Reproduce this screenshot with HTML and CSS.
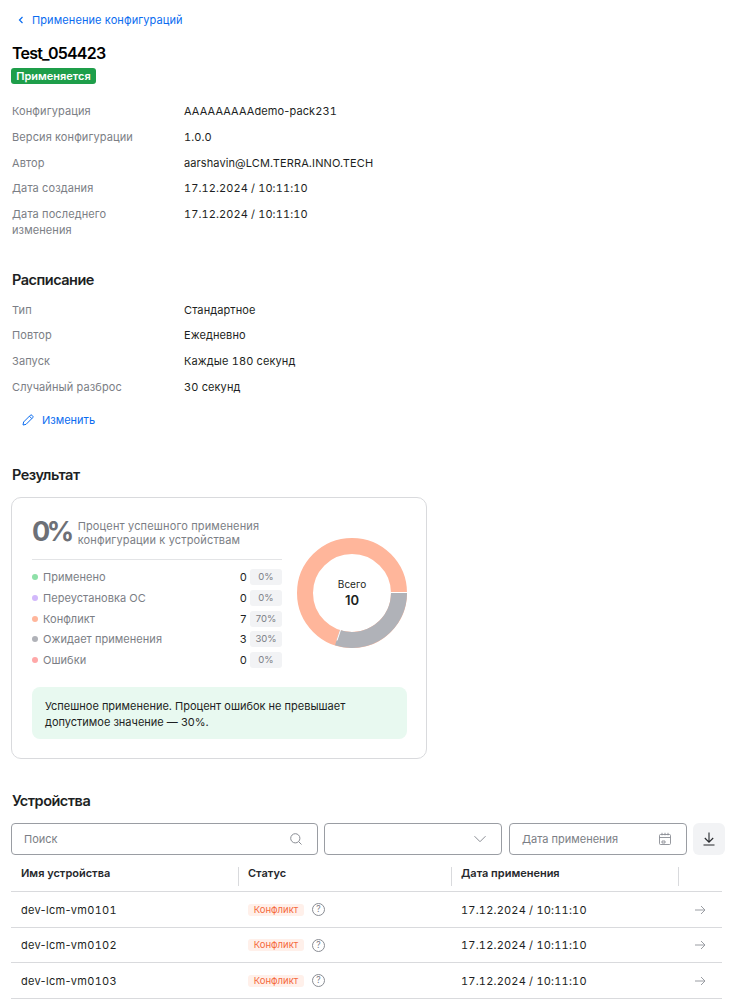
FILE: index.html
```html
<!DOCTYPE html>
<html>

<head>
  <title>Test_054423</title>
  <link rel="stylesheet" href="styles.css">
</head>

<body>
  <a class="back" href="#">
    <svg width="10" height="10" viewBox="0 0 10 10"><path d="M6.500 2 3.500 5l3 3" fill="none" stroke="#0a6cf0" stroke-width="1.200"/></svg>
    Применение конфигураций
  </a>
  <h1>Test_054423</h1>
  <span class="badge">Применяется</span>

  <div class="details first">
    <div class="name">Конфигурация</div><div>AAAAAAAAAdemo-pack<span class="num">231</span></div>
    <div class="name">Версия конфигурации</div><div class="num">1.0.0</div>
    <div class="name">Автор</div><div>aarshavin@LCM.TERRA.INNO.TECH</div>
    <div class="name">Дата создания</div><div class="num">17.12.2024 / 10:11:10</div>
    <div class="name">Дата последнего изменения</div><div class="num">17.12.2024 / 10:11:10</div>
  </div>

  <h2 class="schedule">Расписание</h2>
  <div class="details">
    <div class="name">Тип</div><div>Стандартное</div>
    <div class="name">Повтор</div><div>Ежедневно</div>
    <div class="name">Запуск</div><div>Каждые <span class="num">180</span> секунд</div>
    <div class="name">Случайный разброс</div><div><span class="num">30</span> секунд</div>
  </div>
  <a class="edit" href="#">
    <svg width="14" height="14" viewBox="0 0 14 14"><path d="M2 12l.6-3L9.300 2.300a1.200 1.200 0 0 1 1.700 0l.7.7a1.200 1.200 0 0 1 0 1.700L5 11.400zM8.400 3.200l2.400 2.400" fill="none" stroke="#0a6cf0" stroke-width="1"/></svg>
    Изменить
  </a>

  <h2 class="result">Результат</h2>
  <div class="card">
    <div class="card-top">
      <div class="stats">
        <div class="summary">
          <span class="percent">0%</span>
          <span class="summary-text">Процент успешного применения конфигурации к устройствам</span>
        </div>
        <div class="legend">
          <div class="legend-row"><i class="dot green"></i><span class="legend-name">Применено</span><span class="count">0</span><span class="share">0%</span></div>
          <div class="legend-row"><i class="dot violet"></i><span class="legend-name">Переустановка ОС</span><span class="count">0</span><span class="share">0%</span></div>
          <div class="legend-row"><i class="dot orange"></i><span class="legend-name">Конфликт</span><span class="count">7</span><span class="share">70%</span></div>
          <div class="legend-row"><i class="dot grey"></i><span class="legend-name">Ожидает применения</span><span class="count">3</span><span class="share">30%</span></div>
          <div class="legend-row"><i class="dot red"></i><span class="legend-name">Ошибки</span><span class="count">0</span><span class="share">0%</span></div>
        </div>
      </div>
      <div class="donut">
        <svg width="110" height="110" viewBox="0 0 110 110">
          <circle cx="55" cy="55" r="47" fill="none" stroke="#ffb69b" stroke-width="16"/>
          <path d="M102 55A47 47 0 0 1 40.500 99.700" fill="none" stroke="#b0b2b8" stroke-width="16"/>
          <path d="M110 54.500H94M40 102.500 45.200 87" fill="none" stroke="#fff" stroke-width="1"/>
        </svg>
        <div class="donut-label"><span>Всего</span><b>10</b></div>
      </div>
    </div>
    <div class="note">Успешное применение. Процент ошибок не превышает допустимое значение — 30%.</div>
  </div>

  <h2 class="devices">Устройства</h2>
  <div class="toolbar">
    <div class="field search">
      <span>Поиск</span>
      <svg width="14" height="14" viewBox="0 0 14 14"><circle cx="6.300" cy="6.300" r="4.600" fill="none" stroke="#8a8d94"/><path d="m9.700 9.700 2.800 2.800" stroke="#8a8d94"/></svg>
    </div>
    <div class="field select">
      <span></span>
      <svg width="14" height="14" viewBox="0 0 14 14"><path d="M1.500 4.200 7 9.700l5.500-5.500" fill="none" stroke="#8a8d94"/></svg>
    </div>
    <div class="field date">
      <span>Дата применения</span>
      <svg width="14" height="14" viewBox="0 0 14 14"><path d="M2.500 2.500h9a1 1 0 0 1 1 1v8a1 1 0 0 1-1 1h-9a1 1 0 0 1-1-1v-8a1 1 0 0 1 1-1zM1.500 5.500h11M4 .8v2.500M7 .8v2.500M10 .8v2.500M4 9h3v2H4z" fill="none" stroke="#8a8d94" stroke-width=".9"/></svg>
    </div>
    <button class="download">
      <svg width="16" height="16" viewBox="0 0 16 16"><path d="M8 1.500v9.500M3.800 7 8 11.200 12.200 7M2.500 14h11" fill="none" stroke="#26282c" stroke-width="1.100"/></svg>
    </button>
  </div>

  <table>
    <thead>
      <tr>
        <th class="col-name"><div>Имя устройства</div></th>
        <th class="col-status"><div>Статус</div></th>
        <th class="col-date"><div>Дата применения</div></th>
        <th class="col-arrow"><div></div></th>
      </tr>
    </thead>
    <tbody>
      <tr>
        <td>dev-lcm-vm<span class="num">0101</span></td>
        <td><div class="status"><span class="tag">Конфликт</span><span class="help">?</span></div></td>
        <td class="num date-cell">17.12.2024 / 10:11:10</td>
        <td class="arrow"><svg width="12" height="12" viewBox="0 0 12 12"><path d="M1 6h10M7 2l4 4-4 4" fill="none" stroke="#9a9da3"/></svg></td>
      </tr>
      <tr>
        <td>dev-lcm-vm<span class="num">0102</span></td>
        <td><div class="status"><span class="tag">Конфликт</span><span class="help">?</span></div></td>
        <td class="num date-cell">17.12.2024 / 10:11:10</td>
        <td class="arrow"><svg width="12" height="12" viewBox="0 0 12 12"><path d="M1 6h10M7 2l4 4-4 4" fill="none" stroke="#9a9da3"/></svg></td>
      </tr>
      <tr>
        <td>dev-lcm-vm<span class="num">0103</span></td>
        <td><div class="status"><span class="tag">Конфликт</span><span class="help">?</span></div></td>
        <td class="num date-cell">17.12.2024 / 10:11:10</td>
        <td class="arrow"><svg width="12" height="12" viewBox="0 0 12 12"><path d="M1 6h10M7 2l4 4-4 4" fill="none" stroke="#9a9da3"/></svg></td>
      </tr>
    </tbody>
  </table>
</body>

</html>
```

FILE: styles.css
```css
html, body {
  height: 1004px;
  overflow: hidden;
}
body {
  margin: 0;
  padding: 13px 0 0 12px;
  box-sizing: border-box;
  background: #fff;
  color: #1d1f23;
  font-family: Inter, "Liberation Sans", sans-serif;
  font-size: 12px;
  line-height: 16px;
}
a {
  color: #0a6cf0;
  text-decoration: none;
}
.num {
  font-variant-numeric: tabular-nums;
}
.back {
  display: flex;
  align-items: center;
  gap: 6px;
  margin-left: 4px;
  font-size: 11px;
  line-height: 14px;
  letter-spacing: .1px;
}
h1 {
  margin: 15px 0 0;
  font-size: 16px;
  line-height: 22px;
  font-weight: 600;
  letter-spacing: -.8px;
  color: #000;
}
h2 {
  margin: 0;
  font-size: 14.500px;
  line-height: 20px;
  font-weight: 600;
  letter-spacing: -.5px;
}
.badge {
  display: block;
  width: 85px;
  margin: 4px 0 0 -1px;
  box-sizing: border-box;
  background: #1e9e4a;
  border-radius: 3px;
  color: #fff;
  font-size: 11px;
  line-height: 16px;
  font-weight: 600;
  text-align: center;
}
.details {
  display: grid;
  grid-template-columns: 172px 300px;
  row-gap: 10px;
  font-size: 11px;
  line-height: 15.750px;
  letter-spacing: .1px;
}
.details.first {
  margin-top: 20px;
}
.name {
  width: 120px;
  color: #7b7e85;
  white-space: normal;
}
.details .name:nth-child(3) {
  width: 150px;
}
.schedule {
  margin-top: 31px;
  margin-bottom: 13px;
}
.edit {
  display: flex;
  align-items: center;
  gap: 7px;
  margin: 16px 0 0 9px;
  font-size: 11px;
}
.result {
  margin-top: 37px;
  margin-bottom: 12px;
}
.card {
  width: 416px;
  height: 262px;
  margin-left: -1px;
  padding: 20px 19px 20px 20px;
  box-sizing: border-box;
  border: 1px solid #d9dadd;
  border-radius: 10px;
}
.card-top {
  display: flex;
  justify-content: space-between;
}
.stats {
  width: 250px;
}
.summary {
  display: flex;
  align-items: flex-start;
  gap: 7px;
  height: 42px;
  box-sizing: border-box;
  border-bottom: 1px solid #e3e4e6;
}
.percent {
  font-size: 27px;
  line-height: 28px;
  font-weight: 700;
  letter-spacing: -3.500px;
  color: #6d7077;
}
.summary-text {
  width: 190px;
  padding-top: 1px;
  font-size: 11px;
  line-height: 14px;
  letter-spacing: .15px;
  color: #7b7e85;
}
.legend {
  margin-top: 9.500px;
}
.legend-row {
  display: flex;
  align-items: center;
  height: 16px;
  margin-bottom: 4.800px;
  font-size: 11px;
}
.dot {
  width: 6px;
  height: 6px;
  margin-right: 5px;
  border-radius: 50%;
}
.green { background: #8ee0a8; }
.violet { background: #d2b8fb; }
.orange { background: #ffb69b; }
.grey { background: #b0b2b8; }
.red { background: #ffa8a8; }
.legend-name {
  flex: 1;
  color: #7b7e85;
  letter-spacing: .05px;
}
.count {
  margin-right: 3px;
  font-variant-numeric: tabular-nums;
}
.share {
  width: 32px;
  padding-bottom: 1px;
  background: #f2f3f5;
  border-radius: 3px;
  color: #7b7e85;
  font-size: 9.500px;
  line-height: 15px;
  text-align: center;
}
.donut {
  position: relative;
  width: 110px;
  height: 110px;
  margin-top: 20px;
}
.donut-label {
  position: absolute;
  inset: 0;
  padding-bottom: 2px;
  box-sizing: border-box;
  display: flex;
  flex-direction: column;
  align-items: center;
  justify-content: center;
  font-size: 10px;
  line-height: 16px;
}
.donut-label b {
  font-size: 13px;
  font-weight: 600;
}
.note {
  margin-top: 14.500px;
  padding: 11px 13px 0;
  height: 52px;
  box-sizing: border-box;
  background: #e8f9f0;
  border-radius: 8px;
  font-size: 11px;
}
.devices {
  margin-top: 32px;
  margin-bottom: 12px;
}
.toolbar {
  display: flex;
  gap: 6px;
  margin-left: -1px;
  height: 32px;
}
.field {
  display: flex;
  align-items: center;
  justify-content: space-between;
  padding: 0 14px 0 12px;
  box-sizing: border-box;
  border: 1px solid #9a9da3;
  border-radius: 4px;
  color: #7b7e85;
  font-size: 11px;
}
.search {
  width: 307px;
}
.select {
  width: 178px;
}
.date {
  width: 178px;
  margin-left: 1px;
}
.download {
  display: flex;
  align-items: center;
  justify-content: center;
  width: 32px;
  padding: 0;
  border: 0;
  border-radius: 6px;
  background: #f2f3f5;
}
table {
  width: 711px;
  margin-left: -1px;
  border-collapse: collapse;
  table-layout: fixed;
  font-size: 11px;
}
th {
  height: 37px;
  padding: 0 0 5px;
  box-sizing: border-box;
  vertical-align: bottom;
  border-bottom: 1px solid #d9dadd;
  text-align: left;
  font-weight: 600;
  color: #26282c;
}
th div {
  height: 19px;
  line-height: 12px;
  padding-left: 9px;
  border-left: 1px solid #d9dadd;
}
th.col-name div {
  padding-left: 10px;
  border-left: 0;
}
.col-name { width: 227px; }
.col-status { width: 213px; }
.col-date { width: 227px; }
td {
  height: 35px;
  padding: 0 0 0 10px;
  border-bottom: 1px solid #d9dadd;
  letter-spacing: .3px;
}
tr:nth-child(2) td {
  height: 34px;
}
.date-cell {
  letter-spacing: .2px;
}
.status {
  display: flex;
  align-items: center;
  gap: 8px;
  letter-spacing: 0;
}
.tag {
  width: 56px;
  background: #fff0ea;
  border-radius: 3px;
  color: #f5693c;
  font-size: 9.500px;
  line-height: 12px;
  text-align: center;
}
.help {
  width: 11px;
  height: 11px;
  border: 1px solid #8a8d94;
  border-radius: 50%;
  color: #7b7e85;
  font-size: 8.500px;
  line-height: 11px;
  text-align: center;
}
.arrow {
  text-align: right;
  padding: 0 16px 0 0;
}
.arrow svg {
  display: block;
  margin-left: auto;
}
```
